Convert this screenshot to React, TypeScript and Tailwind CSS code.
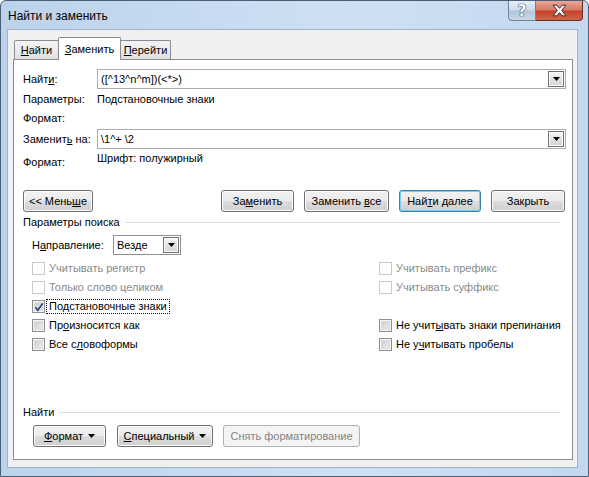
import React from 'react'

const ui = "font-['Liberation_Sans',Arial,sans-serif] text-[11px] leading-[16px] text-black"

function Btn({ children, className = '', def = false, disabled = false }: { children: React.ReactNode; className?: string; def?: boolean; disabled?: boolean }) {
  let look = 'border-[#707070] bg-[linear-gradient(#f2f2f2,#ebebeb_50%,#dddddd_50%,#cfcfcf)] shadow-[inset_0_0_0_1px_#fbfbfb]'
  if (def) look = 'border-[#3c7fb1] bg-[linear-gradient(#f2f2f2,#ebebeb_50%,#dddddd_50%,#cfcfcf)] shadow-[inset_0_0_0_1px_#74d0f4]'
  if (disabled) look = 'border-[#adb2b5] bg-[#f4f4f4] text-[#838383]'
  return (
    <div className={`flex h-[22px] shrink-0 items-center justify-center rounded-[3px] border ${look} ${className}`}>
      {children}
    </div>
  )
}

function Arrow() {
  return (
    <svg width="7" height="4" viewBox="0 0 7 4">
      <path d="M0 0h7L3.5 4z" fill="#000" />
    </svg>
  )
}

function DropBtn() {
  return (
    <div className="flex h-[16px] w-[16px] shrink-0 items-center justify-center border border-[#6f6f6f] bg-[linear-gradient(#f6f6f6,#e2e2e2_50%,#d5d5d5)] shadow-[inset_0_0_0_1px_#fdfdfd]">
      <Arrow />
    </div>
  )
}

function Combo({ value }: { value: string }) {
  return (
    <div className="flex h-[20px] flex-1 items-center border border-[#abadb3] bg-white pl-[3px] pr-[1px]">
      <span className="flex-1 whitespace-pre">{value}</span>
      <DropBtn />
    </div>
  )
}

function Check({ children, checked = false, disabled = false, focus = false }: { children: React.ReactNode; checked?: boolean; disabled?: boolean; focus?: boolean }) {
  return (
    <div className="flex h-[19px] items-center">
      {disabled ? (
        <div className="h-[13px] w-[13px] shrink-0 border border-[#c9c9c9] bg-white" />
      ) : (
        <div className="relative h-[13px] w-[13px] shrink-0 border border-[#8e8f8f] bg-[#f4f4f4] p-[1px]">
          <div className="h-full w-full bg-[linear-gradient(135deg,#c9ccd1,#eeeeee)] shadow-[inset_0_0_0_1px_#dadcdf]" />
          {checked && (
            <svg className="absolute left-[1px] top-[1px]" width="10" height="10" viewBox="0 0 10 10">
              <path d="M1.5 5.2 L3.8 8.2 L8.8 1.2" fill="none" stroke="#2c4a86" strokeWidth="1.7" />
            </svg>
          )}
        </div>
      )}
      <span
        className={`ml-[2px] px-[2px] leading-[13px] ${disabled ? 'text-[#8a8a8a]' : ''} ${focus ? 'outline outline-1 outline-dotted outline-black' : ''}`}
      >
        {children}
      </span>
    </div>
  )
}

function GroupTitle({ children, className = '' }: { children: React.ReactNode; className?: string }) {
  return (
    <div className={`flex h-[16px] items-center pr-[6px] ${className}`}>
      <span>{children}</span>
      <div className="ml-[5px] h-px flex-1 bg-[#d5dfe5]" />
    </div>
  )
}

function Tab({ children, active = false, className = '' }: { children: React.ReactNode; active?: boolean; className?: string }) {
  if (active)
    return (
      <div className={`relative z-10 -mb-px flex h-[23px] items-center justify-center rounded-t-[2px] border border-b-0 border-[#898c95] bg-white ${className}`}>
        {children}
      </div>
    )
  return (
    <div className={`flex h-[19px] items-center justify-center rounded-t-[2px] border border-b-0 border-[#898c95] bg-[linear-gradient(#f3f3f3,#ebebeb_50%,#dedede)] ${className}`}>
      {children}
    </div>
  )
}

export default function App() {
  return (
    <div className={`${ui} h-[477px] w-[589px] bg-white`}>
      <div className="flex h-[477px] w-[589px] flex-col rounded-t-[6px] border border-[#4d5f74] bg-[linear-gradient(90deg,#bcd3ec,#cfe0f3_60%,#c3d8ef)]">
        {/* title bar */}
        <div className="flex h-[28px] shrink-0 items-start pl-[7px] pr-[5px]">
          <span className="self-center pt-[1px] text-[12px] text-[#000]">Найти и заменить</span>
          <div className="ml-auto flex">
            <div className="flex h-[20px] w-[28px] items-center justify-center rounded-bl-[4px] border border-t-0 border-[#6e8299] bg-[linear-gradient(#e6eef7,#cfdceb_45%,#b4c6da_55%,#c9d8e8)] font-['DejaVu_Sans',sans-serif] text-[15px] font-bold text-white [text-shadow:0_0_1px_#2d3d52,0_0_1px_#2d3d52,0_0_1px_#2d3d52]">
              ?
            </div>
            <div className="flex h-[20px] w-[47px] items-center justify-center rounded-br-[4px] border border-l-0 border-t-0 border-[#6a2c22] bg-[linear-gradient(#e9a99a,#d77a66_45%,#c5432b_55%,#d2654c)]">
              <svg width="15" height="13" viewBox="0 0 14 12">
                <path d="M1 1h3.5L7 4l2.5-3H13L9 6l4 5H9.5L7 8l-2.5 3H1l4-5z" fill="#fff" stroke="#3b2520" strokeWidth="0.9" strokeLinejoin="round" />
              </svg>
            </div>
          </div>
        </div>

        {/* client area */}
        <div className="mb-[8px] ml-[6px] mr-[10px] flex flex-1 flex-col border border-[#9fb3ca] bg-[#f0f0f0] pl-[5px] pr-[4px] pb-[7px] pt-[6px]">
          {/* tabs */}
          <div className="flex h-[23px] items-end pl-[1px]">
            <Tab className="w-[45px]">
              <span><u>Н</u>айти</span>
            </Tab>
            <Tab active className="-ml-px w-[63px]">
              <span><u>З</u>аменить</span>
            </Tab>
            <Tab className="-ml-px w-[51px]">
              <span><u>П</u>ерейти</span>
            </Tab>
          </div>

          {/* panel */}
          <div className="flex flex-1 flex-col border border-[#898c95] bg-white pl-[9px] pr-[6px]">
            <div className="mt-[9px] flex items-center">
              <span className="w-[74px] shrink-0">Найт<u>и</u>:</span>
              <Combo value="([^13^n^m])(<*>)" />
            </div>
            <div className="mt-[2px] flex">
              <span className="w-[74px] shrink-0">Параметры:</span>
              <span>Подстановочные знаки</span>
            </div>
            <div className="mt-[3px] flex">
              <span className="w-[74px] shrink-0">Формат:</span>
            </div>
            <div className="mt-[3px] flex items-center">
              <span className="w-[74px] shrink-0">Заменит<u>ь</u> на:</span>
              <Combo value="\1^+ \2" />
            </div>
            <div className="flex h-[22px] items-start">
              <span className="mt-[5px] w-[74px] shrink-0">Формат:</span>
              <span className="mt-[1px]">Шрифт: полужирный</span>
            </div>

            <div className="mt-[19px] flex pr-[1px]">
              <Btn className="w-[70px]"><span>&lt;&lt; Мень<u>ш</u>е</span></Btn>
              <div className="ml-auto flex gap-[10px]">
                <Btn className="w-[73px]"><span>За<u>м</u>енить</span></Btn>
                <Btn className="w-[85px]"><span>Заменить <u>в</u>се</span></Btn>
                <Btn def className="w-[82px]"><span>Най<u>т</u>и далее</span></Btn>
                <Btn className="w-[74px]"><span>Закрыть</span></Btn>
              </div>
            </div>

            <GroupTitle className="mt-[2px]">Параметры поиска</GroupTitle>

            <div className="mt-[5px] flex items-center pl-[9px]">
              <span className="w-[81px] shrink-0">Н<u>а</u>правление:</span>
              <div className="flex h-[20px] w-[68px] items-center border border-[#8e8f8f] bg-white pl-[3px] pr-[1px]">
                <span className="flex-1">Везде</span>
                <DropBtn />
              </div>
            </div>

            <div className="mt-[4px] flex pl-[9px]">
              <div className="flex w-[347px] flex-col">
                <Check disabled>Учитывать регистр</Check>
                <Check disabled>Только слово целиком</Check>
                <Check checked focus>По<u>д</u>становочные знаки</Check>
                <Check>Пр<u>о</u>износится как</Check>
                <Check>Все с<u>л</u>овоформы</Check>
              </div>
              <div className="flex flex-col">
                <Check disabled>Учитывать префикс</Check>
                <Check disabled>Учитывать суффикс</Check>
                <div className="h-[19px]" />
                <Check>Не учит<u>ы</u>вать знаки препинания</Check>
                <Check>Не у<u>ч</u>итывать пробелы</Check>
              </div>
            </div>

            <GroupTitle className="mt-[50px]">Найти</GroupTitle>

            <div className="mt-[5px] flex pl-[10px]">
              <Btn className="w-[73px] gap-[5px]">
                <span><u>Ф</u>ормат</span>
                <Arrow />
              </Btn>
              <Btn className="ml-[11px] w-[96px] gap-[5px]">
                <span><u>С</u>пециальный</span>
                <Arrow />
              </Btn>
              <Btn disabled className="ml-[10px] w-[137px]"><span>Снять форматирование</span></Btn>
            </div>
          </div>
        </div>
      </div>
    </div>
  )
}
